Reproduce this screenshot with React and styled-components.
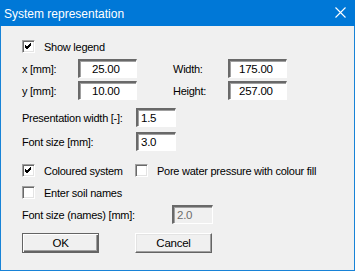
import React from "react";
import styled, { createGlobalStyle } from "styled-components";

const GlobalStyle = createGlobalStyle`
  html, body {
    margin: 0;
    padding: 0;
    background: #ffffff;
  }
`;

function Checkbox({ checked }) {
  return (
    <CheckBoxBox>
      {checked && (
        <svg width="9" height="9" viewBox="0 0 9 9">
          <path d="M1 4 L3 6 L7 2 M1 5 L3 7 L7 3 M1 3 L3 5 L7 1" stroke="#000" strokeWidth="1" fill="none" shapeRendering="crispEdges" />
        </svg>
      )}
    </CheckBoxBox>
  );
}

function CheckItem({ checked, label, w }) {
  return (
    <CheckWrap w={w}>
      <Checkbox checked={checked} />
      <CheckLabel>{label}</CheckLabel>
    </CheckWrap>
  );
}

function App() {
  return (
    <>
      <GlobalStyle />
      <Window>
        <TitleBar>
          <TitleText>System representation</TitleText>
          <CloseIcon width="11" height="11" viewBox="0 0 11 11">
            <path d="M0.5 0.5 L10.5 10.5 M10.5 0.5 L0.5 10.5" stroke="#fff" strokeWidth="1.1" />
          </CloseIcon>
        </TitleBar>
        <Body>
          <Row mt={14} h={13}>
            <CheckItem checked label="Show legend" />
          </Row>
          <Row mt={6} h={19}>
            <Label w={56}>x [mm]:</Label>
            <Field w={59} indent={12}>25.00</Field>
            <Label w={55} ml={36}>Width:</Label>
            <Field w={59} indent={9}>175.00</Field>
          </Row>
          <Row mt={3} h={19}>
            <Label w={56}>y [mm]:</Label>
            <Field w={59} indent={12}>10.00</Field>
            <Label w={55} ml={36}>Height:</Label>
            <Field w={59} indent={9}>257.00</Field>
          </Row>
          <Row mt={8} h={19}>
            <Label w={114}>Presentation width [-]:</Label>
            <Field w={40} indent={3}>1.5</Field>
          </Row>
          <Row mt={5} h={19}>
            <Label w={114}>Font size [mm]:</Label>
            <Field w={40} indent={3}>3.0</Field>
          </Row>
          <Row mt={13} h={13}>
            <CheckItem checked label="Coloured system" w={113} />
            <CheckItem label="Pore water pressure with colour fill" />
          </Row>
          <Row mt={9} h={13}>
            <CheckItem label="Enter soil names" />
          </Row>
          <Row mt={6} h={19}>
            <Label w={150}>Font size (names) [mm]:</Label>
            <Field w={41} indent={3} disabled>2.0</Field>
          </Row>
          <Row mt={9} h={20}>
            <Button primary>OK</Button>
            <Button ml={36}>Cancel</Button>
          </Row>
        </Body>
      </Window>
    </>
  );
}

const Window = styled.div`
  width: 353px;
  height: 270px;
  border: 1px solid #1883d7;
  border-top: none;
  background: #f0f0f0;
  display: flex;
  flex-direction: column;
  font-family: "Liberation Sans", Arial, sans-serif;
`;

const TitleBar = styled.div`
  height: 26px;
  background: #0078d7;
  display: flex;
  align-items: center;
  justify-content: space-between;
  padding: 0 9px 0 4px;
  margin: 0 -1px;
`;

const TitleText = styled.span`
  color: #ffffff;
  font-size: 12px;
  line-height: 14px;
  padding-top: 1px;
`;

const CloseIcon = styled.svg`
  display: block;
  margin-top: -1px;
`;

const Body = styled.div`
  display: flex;
  flex-direction: column;
  padding-left: 21px;
  font-size: 11px;
  letter-spacing: -0.25px;
  color: #000000;
`;

const Row = styled.div`
  display: flex;
  align-items: center;
  margin-top: ${(p) => p.mt}px;
  height: ${(p) => p.h}px;
`;

const Label = styled.span`
  width: ${(p) => p.w}px;
  margin-left: ${(p) => p.ml || 0}px;
  flex-shrink: 0;
  white-space: nowrap;
`;

const Field = styled.div`
  box-sizing: border-box;
  width: ${(p) => p.w}px;
  height: 19px;
  background: ${(p) => (p.disabled ? "#f0f0f0" : "#ffffff")};
  color: ${(p) => (p.disabled ? "#6d6d6d" : "#000000")};
  border-top: 2px solid #696969;
  border-left: 2px solid #696969;
  border-right: 1px solid #ffffff;
  border-bottom: 1px solid #ffffff;
  box-shadow: ${(p) => (p.disabled ? "inset 1px 1px 0 #a0a0a0" : "inset 1px 1px 0 #a0a0a0")};
  padding-left: ${(p) => p.indent}px;
  font-size: 11.5px;
  line-height: 16px;
  flex-shrink: 0;
`;

const CheckWrap = styled.label`
  display: flex;
  align-items: center;
  width: ${(p) => (p.w ? `${p.w}px` : "auto")};
  flex-shrink: 0;
`;

const CheckBoxBox = styled.span`
  box-sizing: border-box;
  width: 13px;
  height: 13px;
  background: #ffffff;
  border-top: 1px solid #a0a0a0;
  border-left: 1px solid #a0a0a0;
  border-right: 1px solid #ffffff;
  border-bottom: 1px solid #ffffff;
  box-shadow: inset 1px 1px 0 #696969, inset -1px -1px 0 #e3e3e3;
  display: flex;
  align-items: center;
  justify-content: center;
  flex-shrink: 0;
`;

const CheckLabel = styled.span`
  margin-left: 9px;
  white-space: nowrap;
`;

const Button = styled.div`
  box-sizing: border-box;
  width: 77px;
  height: 20px;
  margin-left: ${(p) => p.ml || 0}px;
  background: #f0f0f0;
  display: flex;
  align-items: center;
  justify-content: center;
  font-size: 11.5px;
  border: 1px solid ${(p) => (p.primary ? "#646464" : "#ffffff")};
  border-right-color: #646464;
  border-bottom-color: #646464;
  box-shadow: ${(p) =>
    p.primary
      ? "inset 1px 1px 0 #ffffff, inset -1px -1px 0 #646464, inset -2px -2px 0 #a0a0a0"
      : "inset -1px -1px 0 #a0a0a0, inset 1px 1px 0 #e3e3e3"};
`;

export default App;
